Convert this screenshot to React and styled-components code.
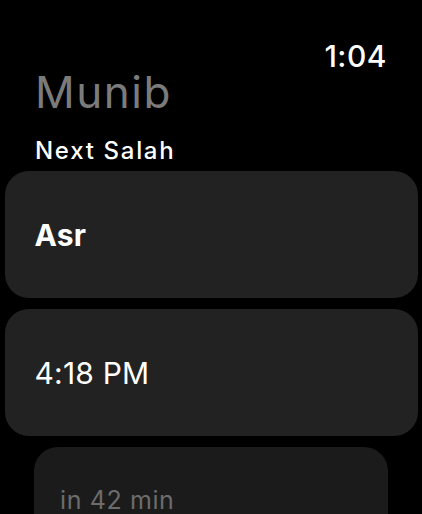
import React from "react";
import styled, { createGlobalStyle } from "styled-components";

const GlobalStyle = createGlobalStyle`
  html, body {
    margin: 0;
    padding: 0;
    background: #000;
    overflow: hidden;
  }
  body {
    font-family: Inter, "Noto Sans", "Liberation Sans", sans-serif;
    color: #fff;
  }
`;

const Screen = styled.div`
  width: 422px;
  height: 514px;
  background: #000;
  padding: 0 5px;
  box-sizing: border-box;
  overflow: hidden;
`;

const Header = styled.div`
  display: flex;
  justify-content: space-between;
  align-items: flex-start;
  padding: 0 30px;
  height: 118px;
`;

const Title = styled.h1`
  margin: 67px 0 0;
  font-size: 44px;
  font-weight: 400;
  line-height: 50px;
  color: #7b7b7b;
  letter-spacing: 1.5px;
`;

const Clock = styled.div`
  margin-top: 36px;
  font-size: 30px;
  font-weight: 500;
  line-height: 40px;
  letter-spacing: 0.5px;
  color: #fff;
`;

const Section = styled.div`
  padding: 18px 30px 0;
  font-size: 24px;
  font-weight: 500;
  line-height: 30px;
  height: 35px;
  letter-spacing: 1.7px;
`;

const List = styled.div`
  display: flex;
  flex-direction: column;
  align-items: center;
  gap: 11px;
`;

const Card = styled.div`
  width: ${(p) => (p.$inset ? "354px" : "413px")};
  height: 127px;
  box-sizing: border-box;
  background: ${(p) => (p.$inset ? "#1b1b1b" : "#222222")};
  border-radius: 24px;
  display: flex;
  align-items: ${(p) => (p.$inset ? "flex-start" : "center")};
  padding: ${(p) => (p.$inset ? "38px 0 0 26px" : "0 0 0 30px")};
  flex-shrink: 0;
`;

const CardText = styled.span`
  font-size: ${(p) => (p.$small ? "25px" : "30px")};
  line-height: 30px;
  font-weight: ${(p) => (p.$bold ? 700 : 400)};
  letter-spacing: ${(p) => (p.$small ? "0.6px" : "0.2px")};
  color: ${(p) => (p.$muted ? "#6c6c6c" : "#fff")};
`;

export default function App() {
  return (
    <Screen>
      <GlobalStyle />
      <Header>
        <Title>Munib</Title>
        <Clock>1:04</Clock>
      </Header>
      <Section>Next Salah</Section>
      <List>
        <Card>
          <CardText $bold>Asr</CardText>
        </Card>
        <Card>
          <CardText>4:18 PM</CardText>
        </Card>
        <Card $inset>
          <CardText $small $muted>in 42 min</CardText>
        </Card>
      </List>
    </Screen>
  );
}
